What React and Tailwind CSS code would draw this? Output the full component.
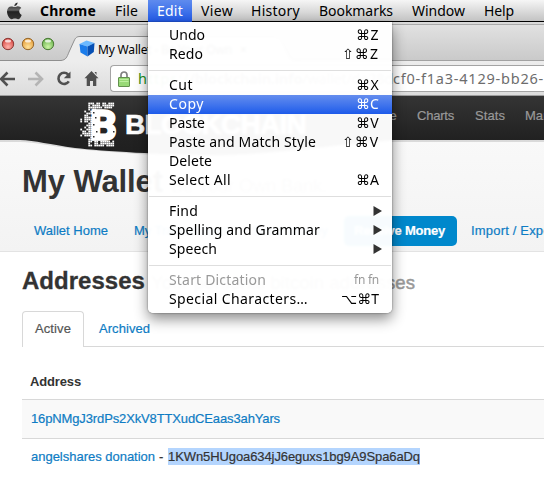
import React, { useLayoutEffect, useRef } from "react";

const SYS = "font-['Noto_Sans','Liberation_Sans',sans-serif]";

// Spreads the letters of a label evenly over the width of its box.
function Fit({ className = "", children }) {
  const box = useRef(null);
  const text = useRef(null);
  useLayoutEffect(() => {
    const t = text.current;
    t.style.letterSpacing = "0px";
    const natural = t.getBoundingClientRect().width;
    const n = t.textContent.length;
    t.style.letterSpacing = (box.current.clientWidth - natural) / n + "px";
  }, [children]);
  return (
    <span ref={box} className={"inline-block shrink-0 whitespace-pre text-left " + className}>
      <span ref={text}>{children}</span>
    </span>
  );
}

function Apple() {
  return (
    <svg width="17" height="18" viewBox="0 0 17 18" className="ml-[5px] shrink-0">
      <defs>
        <linearGradient id="apple" x1="0" y1="0" x2="0" y2="1">
          <stop offset="0" stopColor="#222" />
          <stop offset="0.45" stopColor="#666" />
          <stop offset="0.55" stopColor="#222" />
          <stop offset="1" stopColor="#333" />
        </linearGradient>
      </defs>
      <path fill="url(#apple)" d="M11.6 0.6c.1 1.7-1.4 3.8-3.3 3.7C8.1 2.600 9.700.8 11.600.6zM8.700 5.100c.8 0 1.700-.8 3.200-.8 1.400 0 2.700.7 3.400 1.800-3 1.700-2.500 5.600.4 6.800-.7 2-2.200 4.300-3.600 4.300-1.200 0-1.600-.7-3.200-.7s-2 .7-3.200.7C3.600 17.200 1 13.100 1 9.500c0-3.300 2.100-5.100 4.200-5.100 1.500 0 2.500.7 3.500.7z" />
    </svg>
  );
}

function MenuBar() {
  return (
    <div className={"flex h-[22px] items-center border-b border-black bg-linear-to-b from-[#f6f6f6] to-[#c3c3c3] text-[14px] leading-[20px] text-black " + SYS}>
      <div className="w-[40px] shrink-0 pl-px"><Apple /></div>
      <Fit className="mr-[19px] w-[56px] font-bold">Chrome</Fit>
      <Fit className="mr-[10px] w-[23px]">File</Fit>
      <div className="flex h-[22px] w-[44px] shrink-0 items-center bg-linear-to-b from-[#5f8bee] to-[#2058e6] pl-[9px] text-white">
        <Fit className="w-[26px]">Edit</Fit>
      </div>
      <Fit className="mr-[18px] ml-[9px] w-[32px]">View</Fit>
      <Fit className="mr-[19px] w-[49px]">History</Fit>
      <Fit className="mr-[19px] w-[74px]">Bookmarks</Fit>
      <Fit className="mr-[19px] w-[53px]">Window</Fit>
      <Fit className="w-[30px]">Help</Fit>
    </div>
  );
}

function Light({ id, rim, dark, lite }) {
  return (
    <svg width="14" height="14" viewBox="0 0 14 14">
      <defs>
        <radialGradient id={id} cx="0.5" cy="0.75" r="0.7">
          <stop offset="0" stopColor={lite} />
          <stop offset="1" stopColor={dark} />
        </radialGradient>
      </defs>
      <circle cx="7" cy="7" r="5.700" fill={"url(#" + id + ")"} stroke={rim} strokeWidth="1" />
      <ellipse cx="7" cy="3.900" rx="3" ry="1.500" fill="#fff" opacity="0.75" />
    </svg>
  );
}

function TabStrip() {
  return (
    <div className="h-[39px] bg-linear-to-b from-[#e3e3e3] to-[#c9c9c9]">
      <div className="h-[2px] bg-[#d9d9d9]" />
      <div className="flex h-[37px] border-t border-[#a9a9a9]">
        <div className="flex w-[61px] shrink-0 gap-[6px] border-b border-[#8f8f8f] pt-[12px] pl-px">
          <Light id="red" rim="#8c3a36" dark="#d64540" lite="#ffb3ab" />
          <Light id="amber" rim="#97682b" dark="#e39a38" lite="#ffe39a" />
          <Light id="green" rim="#4b7a36" dark="#68b04d" lite="#ccf5a5" />
        </div>
        <div className="relative w-[239px] shrink-0">
          <svg width="239" height="36" viewBox="0 0 239 36" className="absolute inset-0">
            <path d="M0 35.500C5 35 6 32 8 27L13 16C14.500 12.500 16 11.500 19 11.500H214C219 11.500 220 14 222 18L228 31C229 34 232 35.500 236 35.500V36H0z" fill="#ededed" />
            <path d="M0 35.500C5 35 6 32 8 27L13 16C14.500 12.500 16 11.500 19 11.500H214C219 11.500 220 14 222 18L228 31C229 34 232 35.500 236 35.500H239" fill="none" stroke="#8f8f8f" />
          </svg>
          <div className="relative flex pt-[15px] pl-[18px]">
            <svg width="16" height="18" viewBox="0 0 16 18" className="mr-[3px]">
              <path d="M.5 4L7.500.6 15.500 3 8.500 6.500z" fill="#6bb9ff" />
              <path d="M.5 4L8.500 6.500V16.500L1.500 12.500z" fill="#1b7cea" />
              <path d="M8.500 6.500L15.500 3 14.800 12 8.500 16.500z" fill="#0750b4" />
            </svg>
            <div className={"flex h-[20px] items-center text-[12px] text-black " + SYS}>
              <Fit className="w-[134px]">My Wallet - Be Your Own</Fit>
              <span className="ml-[8px]">×</span>
            </div>
          </div>
        </div>
        <div className="flex-1 border-b border-[#a2a2a2]" />
      </div>
    </div>
  );
}

function Toolbar() {
  return (
    <div className="flex h-[35px] border-b border-[#9d9d9d] bg-linear-to-b from-[#ededed] to-[#dcdcdc]">
      <svg width="110" height="34" viewBox="0 0 110 34" className="shrink-0" fill="none">
        <g stroke="#505050" strokeWidth="2.600">
          <path d="M1 18H15M7.500 11.500L1 18l6.500 6.500" />
          <path d="M42 18H28M35.500 11.500L42 18l-6.500 6.500" stroke="#b4b4b4" />
          <path d="M68.200 13.600A5.600 5.600 0 1 0 68.800 20.400" />
        </g>
        <path d="M70.500 10.500V17.200H63.800z" fill="#505050" />
        <path d="M91.500 10L98.500 17.300H96.300V25H93V20H90V25H86.700V17.300H84.500zM94.500 11h2v3z" fill="#505050" />
      </svg>
      <div className={"mt-[4px] flex h-[27px] flex-1 items-center rounded-l-[4px] border border-r-0 border-[#a4a4a4] bg-white text-[14.500px] text-[#6d6d6d] " + SYS}>
        <svg width="12" height="16" viewBox="0 0 12 16" className="mr-[8px] ml-[7px] shrink-0">
          <path d="M3 8V4a3 3 0 0 1 6 0V8" fill="none" stroke="#808080" strokeWidth="1.700" />
          <rect x="0.500" y="6.500" width="11" height="9" rx="0.500" fill="#98d977" stroke="#62904e" />
          <path d="M1.500 8.500h9M1.500 10.500h9" stroke="#bdeea0" />
        </svg>
        <Fit className="w-[51px] text-[#1b9220]">https:/</Fit>
        <Fit className="w-[204px]"><b>/blockchain.info</b>/wallet/da28d</Fit>
        <Fit className="w-[151px]">cf0-f1a3-4129-bb26-</Fit>
      </div>
    </div>
  );
}

// Scattered squares that dissolve the left, top and bottom edges of the coin mark.
const bits = [];
for (let y = 0; y < 22; y++) {
  for (let x = 0; x < 17; x++) {
    const dx = Math.max(0, 8 - x) / 8;
    const dy = Math.abs(y - 10.5) / 10.5;
    const h = Math.abs(Math.sin(x * 12.9898 + y * 78.233) * 43758.5453) % 1;
    const corner = (x < 2 && (y < 5 || y > 17)) || (x < 4 && (y < 2 || y > 19));
    if (!corner && (dx > 0 || dy > 0.78) && h > 0.12 + dx * 0.38) bits.push([x, y]);
  }
}

function CoinMark() {
  return (
    <svg width="38" height="46" viewBox="0 0 38 46" className="shrink-0">
      <g fill="#fff">
        {bits.map(([x, y]) => (
          <rect key={x + "-" + y} x={x * 2 + 0.3} y={y * 2 + 0.6} width="1.800" height="1.800" />
        ))}
        <text x="10" y="37.500" fontSize="43" fontWeight="900" textLength="27" lengthAdjust="spacingAndGlyphs" stroke="#fff" strokeWidth="1.500" className="font-['Roboto',sans-serif]">B</text>
      </g>
      <g fill="#2b2b2b">
        <rect x="13" y="10" width="1.500" height="1.500" />
        <rect x="15" y="15" width="1.500" height="1.500" />
        <rect x="13" y="22" width="1.500" height="1.500" />
        <rect x="16" y="29" width="1.500" height="1.500" />
        <rect x="13" y="34" width="1.500" height="1.500" />
        <rect x="33" y="29" width="1.500" height="1.500" />
      </g>
    </svg>
  );
}

function SiteHeader() {
  return (
    <div className="relative h-[44px]">
      <svg width="544" height="64" viewBox="0 0 544 64" className="absolute top-0 left-0">
        <defs>
          <linearGradient id="bar" x1="0" y1="0" x2="0" y2="1">
            <stop offset="0" stopColor="#343434" />
            <stop offset="0.700" stopColor="#222" />
            <stop offset="1" stopColor="#1f1f1f" />
          </linearGradient>
        </defs>
        <path d="M0 0H544V46H392C340 50 290 57 240 60C200 64 110 56 75 53C50 50 35 46 20 46H0z" fill="#000" opacity="0.120" />
        <path d="M0 0H544V44H392C340 48 290 56 240 58C200 61 110 56 75 52C50 48.500 35 44.500 20 44H0z" fill="url(#bar)" />
      </svg>
      <div className="relative flex pl-[80px] font-['Liberation_Sans',Arial,sans-serif]">
        <div className="h-[44px] pt-[6px]"><CoinMark /></div>
        <Fit className="mt-[13px] ml-[7px] w-[181px] text-[28px] leading-[32px] font-bold text-white [-webkit-text-stroke:0.6px]">BLOCKCHAIN</Fit>
        <div className="mt-[10px] ml-[55px] flex text-[13px] leading-[20px] text-[#999] [-webkit-text-stroke:0.2px]">
          <Fit className="mr-[20px] w-[36px]">Home</Fit>
          <Fit className="mr-[21px] w-[37px]">Charts</Fit>
          <Fit className="mr-[20px] w-[30px]">Stats</Fit>
          <Fit className="w-[40px]">Market</Fit>
        </div>
      </div>
    </div>
  );
}

function WalletHeader() {
  return (
    <div className="h-[112px] border-b border-[#e3e3e3] bg-linear-to-b from-[#f9f9f9] to-[#f3f3f3] pt-[22px]">
      <div className="flex items-baseline pl-[22px] leading-[40px]">
        <Fit className="w-[141px] text-[31px] font-bold text-[#333]">My Wallet</Fit>
        <Fit className="ml-[8px] w-[156px] text-[18.500px] text-[#999]">Be Your Own Bank.</Fit>
      </div>
      <div className="mt-[10px] flex h-[30px] items-center pl-[34px] text-[13px] text-[#0e7cc4] [-webkit-text-stroke:0.2px]">
        <Fit className="mr-[26px] w-[74px]">Wallet Home</Fit>
        <Fit className="mr-[24px] w-[94px]">My Transactions</Fit>
        <Fit className="mr-[16px] w-[76px]">Send Money</Fit>
        <div className="mr-[14px] flex h-[30px] w-[113px] shrink-0 items-center rounded-[5px] bg-[#0088cc] pl-[10px] font-bold text-white">
          <Fit className="w-[91px]">Receive Money</Fit>
        </div>
        <Fit className="w-[88px]">Import / Export</Fit>
      </div>
    </div>
  );
}

function Addresses() {
  return (
    <div className="pt-[13px] pl-[22px] text-[13px] text-[#333]">
      <div className="flex items-baseline leading-[32px]">
        <Fit className="w-[123px] text-[24px] font-bold [-webkit-text-stroke:0.3px]">Addresses</Fit>
        <Fit className="ml-[6px] w-[264px] text-[18.500px] text-[#999] [-webkit-text-stroke:0.5px]">Your personal bitcoin addresses</Fit>
      </div>
      <div className="mt-[12px] flex h-[36px] [-webkit-text-stroke:0.2px]">
        <div className="flex w-[62px] justify-center rounded-t-[4px] border border-b-0 border-[#d8d8d8] pt-[8px] leading-[18px] text-[#555]">
          <Fit className="w-[36px]">Active</Fit>
        </div>
        <div className="flex-1 border-b border-[#d8d8d8] pt-[9px] pl-[15px] leading-[18px] text-[#0e7cc4]">
          <Fit className="w-[51px]">Archived</Fit>
        </div>
      </div>
      <div className="h-[52px] pt-[26px] pl-[8px] leading-[18px] font-bold">
        <Fit className="w-[51px]">Address</Fit>
      </div>
      <div className="h-[39px] border-t border-[#d8d8d8] bg-[#f9f9f9] pt-[10px] pl-[9px] leading-[18px] text-[#0e7cc4] [-webkit-text-stroke:0.2px]">
        <Fit className="w-[249px]">16pNMgJ3rdPs2XkV8TTXudCEaas3ahYars</Fit>
      </div>
      <div className="flex border-t border-[#d8d8d8] pt-[9px] pl-[9px] leading-[17px] [-webkit-text-stroke:0.2px]">
        <Fit className="w-[124px] text-[#0e7cc4]">angelshares donation</Fit>
        <span className="w-[13px] pl-[4px]">-</span>
        <Fit className="h-[17px] w-[252px] bg-[#b4d5fe]">1KWn5HUgoa634jJ6eguxs1bg9A9Spa6aDq</Fit>
      </div>
    </div>
  );
}

function Item({ w, label, keys, kw, sub, on, off }) {
  const tone = on ? "bg-linear-to-b from-[#648dee] to-[#1c5aea] text-white" : off ? "text-[#999]" : "text-black";
  return (
    <div className={"flex h-[19px] items-center justify-between pr-[13px] pb-[2px] pl-[21px] leading-[19px] " + tone}>
      <Fit className={w}>{label}</Fit>
      {keys && <Fit className={kw + (off ? " text-[12px]" : " font-['Noto_Sans','DejaVu_Sans',sans-serif]")}>{keys}</Fit>}
      {sub && (
        <svg width="9" height="10" viewBox="0 0 9 10" className="-mr-[3px]">
          <path d="M0.500 0L9 5 0.500 10z" fill="#333" />
        </svg>
      )}
    </div>
  );
}

const Rule = () => <div className="mx-px h-[12px] pt-[6px]"><div className="h-px bg-[#dedede]" /></div>;

function EditMenu() {
  return (
    <div className={"absolute top-[22px] left-[148px] h-[291px] w-[244px] rounded-b-[5px] bg-white/97 pt-[4px] text-[14px] shadow-[0_6px_14px_rgba(0,0,0,0.45),0_0_2px_rgba(0,0,0,0.5)] backdrop-blur-[1px] " + SYS}>
      <Item w="w-[36px]" label="Undo" keys="⌘Z" kw="w-[23px]" />
      <Item w="w-[34px]" label="Redo" keys="⇧⌘Z" kw="w-[37px]" />
      <Rule />
      <Item w="w-[24px]" label="Cut" keys="⌘X" kw="w-[23px]" />
      <Item w="w-[35px]" label="Copy" keys="⌘C" kw="w-[23px]" on />
      <Item w="w-[36px]" label="Paste" keys="⌘V" kw="w-[23px]" />
      <Item w="w-[147px]" label="Paste and Match Style" keys="⇧⌘V" kw="w-[37px]" />
      <Item w="w-[43px]" label="Delete" />
      <Item w="w-[62px]" label="Select All" keys="⌘A" kw="w-[23px]" />
      <Rule />
      <Item w="w-[29px]" label="Find" sub />
      <Item w="w-[151px]" label="Spelling and Grammar" sub />
      <Item w="w-[48px]" label="Speech" sub />
      <Rule />
      <Item w="w-[97px]" label="Start Dictation" keys="fn fn" kw="w-[25px]" off />
      <Item w="w-[139px]" label="Special Characters…" keys="⌥⌘T" kw="w-[38px]" />
    </div>
  );
}

export default function App() {
  return (
    <div className="relative h-[500px] w-[544px] overflow-hidden bg-white font-['Liberation_Sans',Arial,sans-serif]">
      <MenuBar />
      <TabStrip />
      <Toolbar />
      <div className="flex flex-col">
        <div className="z-10"><SiteHeader /></div>
        <WalletHeader />
        <Addresses />
      </div>
      <div className="absolute top-0 left-0 z-20"><EditMenu /></div>
    </div>
  );
}
